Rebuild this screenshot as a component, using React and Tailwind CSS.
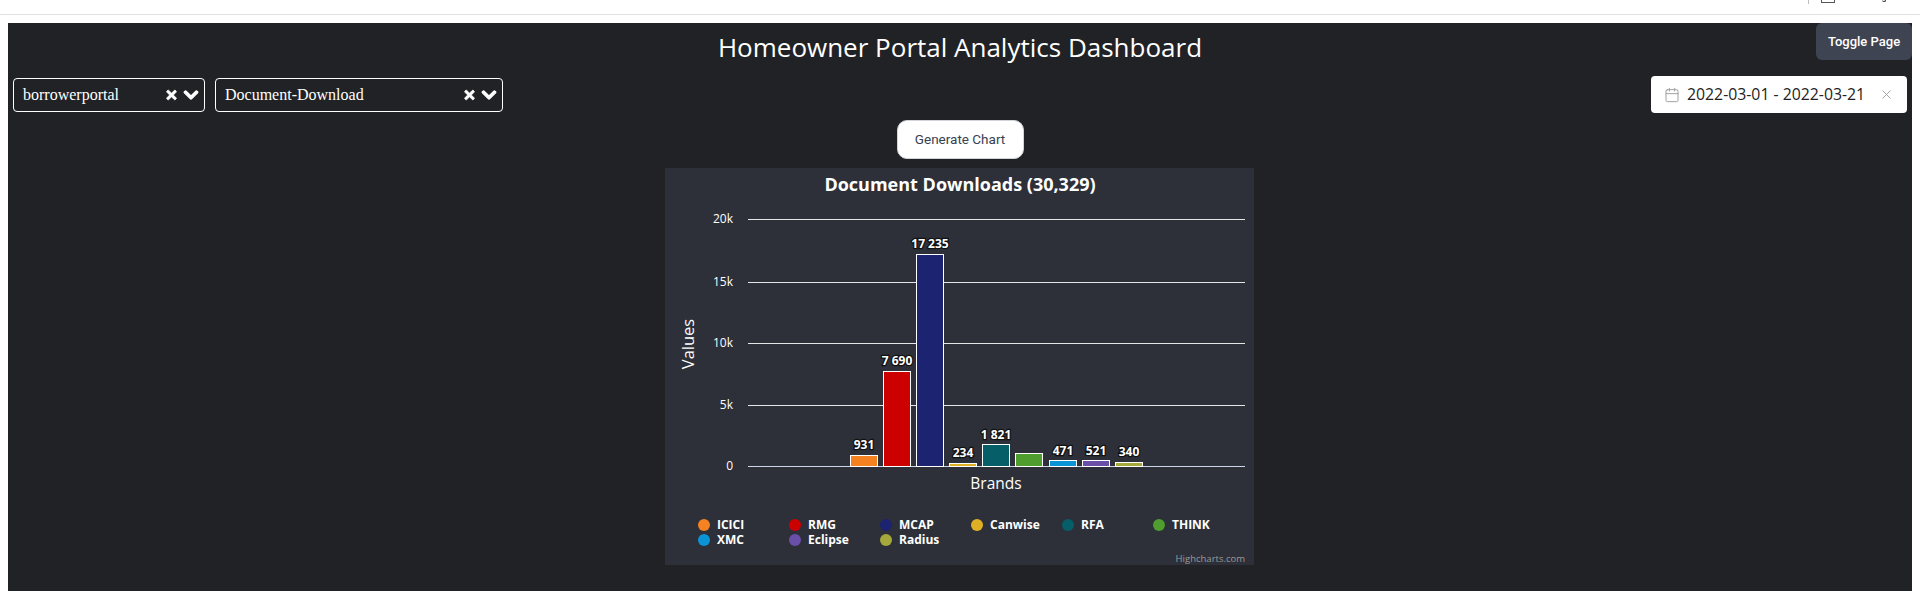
import { FaTimes, FaChevronDown } from "react-icons/fa";
import { Calendar, X } from "lucide-react";

const AXIS_LABELS = [
  { text: "20k", y: 219 },
  { text: "15k", y: 282 },
  { text: "10k", y: 343 },
  { text: "5k", y: 405 },
  { text: "0", y: 466 },
];

const BARS = [
  { x: 850, top: 455, color: "#f58220", label: "931", labelY: 445 },
  { x: 883, top: 371, color: "#cc0000", label: "7 690", labelY: 361 },
  { x: 916, top: 254, color: "#1c2370", label: "17 235", labelY: 244 },
  { x: 949, top: 463, color: "#dfb026", label: "234", labelY: 453 },
  { x: 982, top: 444, color: "#055e68", label: "1 821", labelY: 435 },
  { x: 1015, top: 453, color: "#4f9d2f" },
  { x: 1049, top: 460, color: "#0a94d6", label: "471", labelY: 451 },
  { x: 1082, top: 460, color: "#6a4fa8", label: "521", labelY: 451 },
  { x: 1115, top: 462, color: "#a5a93c", label: "340", labelY: 452 },
];

const LEGEND = [
  { name: "ICICI", color: "#f58220", x: 704, y: 525 },
  { name: "RMG", color: "#cc0000", x: 795, y: 525 },
  { name: "MCAP", color: "#1c2370", x: 886, y: 525 },
  { name: "Canwise", color: "#dfb026", x: 977, y: 525 },
  { name: "RFA", color: "#055e68", x: 1068, y: 525 },
  { name: "THINK", color: "#4f9d2f", x: 1159, y: 525 },
  { name: "XMC", color: "#0a94d6", x: 704, y: 540 },
  { name: "Eclipse", color: "#6a4fa8", x: 795, y: 540 },
  { name: "Radius", color: "#a5a93c", x: 886, y: 540 },
];

function Select({ value, width }) {
  return (
    <div className={`flex h-[34px] items-center justify-between rounded-[4px] border border-white pl-[9px] pr-[5px] ${width}`}>
      <span className="font-['Liberation_Serif',serif] text-[16px] text-white">{value}</span>
      <span className="flex items-center gap-[6px] text-white">
        <FaTimes className="h-[14px] w-[11px] stroke-[30px]" />
        <FaChevronDown className="h-[16px] w-[16px] stroke-[40px]" />
      </span>
    </div>
  );
}

function Chart() {
  return (
    <svg viewBox="665 168 589 397" className="block h-[397px] w-[589px] bg-[#2d3039] font-['Open_Sans',sans-serif]">
      <text x="960" y="191" textAnchor="middle" fill="#fff" fontSize="18" fontWeight="700">Document Downloads (30,329)</text>

      {AXIS_LABELS.map((tick) => (
        <g key={tick.text}>
          <line x1="748" x2="1245" y1={tick.y + 0.5} y2={tick.y + 0.5} stroke={tick.text === "0" ? "#ccd6eb" : "#e6e6e6"} />
          <text x="733" y={tick.y + 4} textAnchor="end" fill="#fff" fontSize="12">{tick.text}</text>
        </g>
      ))}

      <text transform="translate(694 344) rotate(-90)" textAnchor="middle" fill="#fff" fontSize="16.5">Values</text>
      <text x="996" y="489" textAnchor="middle" fill="#fff" fontSize="15.5">Brands</text>

      {BARS.map((bar) => (
        <g key={bar.x}>
          <rect x={bar.x + 0.5} y={bar.top + 0.5} width="27" height={466 - bar.top} fill={bar.color} stroke="#fff" />
          {bar.label && (
            <text
              x={bar.x + 14}
              y={bar.labelY + 4}
              textAnchor="middle"
              fill="#fff"
              stroke="#111"
              strokeWidth="2.5"
              fontSize="12"
              fontWeight="700"
              className="[paint-order:stroke]"
            >
              {bar.label}
            </text>
          )}
        </g>
      ))}

      {LEGEND.map((item) => (
        <g key={item.name}>
          <circle cx={item.x} cy={item.y} r="6" fill={item.color} />
          <text x={item.x + 13} y={item.y + 4} fill="#fff" fontSize="12" fontWeight="700">{item.name}</text>
        </g>
      ))}

      <text x="1245" y="562" textAnchor="end" fill="#999" fontSize="9.5">Highcharts.com</text>
    </svg>
  );
}

export default function App() {
  return (
    <div className="min-h-[596px] bg-white">
      <div className="flex h-[15px] items-start justify-end border-b border-[#e2e2e2] pr-[34px]">
        <div className="flex h-[4px] items-start overflow-hidden">
          <span className="h-[4px] w-px bg-[#bdbdbd]" />
          <span className="ml-[12px] h-[3px] w-[14px] rounded-b-[1px] border-x border-b border-[#555]" />
          <span className="ml-[47px] h-[2px] w-[4px] rounded-b-full border-b border-r border-[#333]" />
        </div>
      </div>

      <main className="relative mx-2 mt-2 h-[568px] bg-[#202226]">
        <button className="absolute right-0 top-0 h-[37px] w-[96px] rounded-[6px] bg-[#3f4452] font-['Roboto',sans-serif] text-[13px] font-medium text-white">
          Toggle Page
        </button>

        <h1 className="pt-[8px] text-center font-['Open_Sans',sans-serif] text-[26px] leading-[32px] text-white">
          Homeowner Portal Analytics Dashboard
        </h1>

        <div className="mt-[13px] flex items-center justify-between px-[5px]">
          <div className="flex gap-[10px]">
            <Select value="borrowerportal" width="w-[192px]" />
            <Select value="Document-Download" width="w-[288px]" />
          </div>
          <div className="flex h-[37px] w-[256px] items-center rounded-[4px] bg-white pl-[13px] pr-[13px] font-['Open_Sans',sans-serif] text-[15.8px] text-[#222]">
            <Calendar className="h-[16px] w-[16px] text-[#a0a0a0]" strokeWidth={1.5} />
            <span className="ml-[7px] flex-1">2022-03-01 - 2022-03-21</span>
            <X className="h-[15px] w-[15px] text-[#a0a0a0]" strokeWidth={1.5} />
          </div>
        </div>

        <div className="mt-[7px] flex justify-center">
          <button className="h-[39px] w-[127px] rounded-[10px] border border-[#d1d5db] bg-white font-['Roboto',sans-serif] text-[13.5px] text-[#374151]">
            Generate Chart
          </button>
        </div>

        <div className="mt-[9px] flex justify-center pr-[2px]">
          <Chart />
        </div>
      </main>
    </div>
  );
}
